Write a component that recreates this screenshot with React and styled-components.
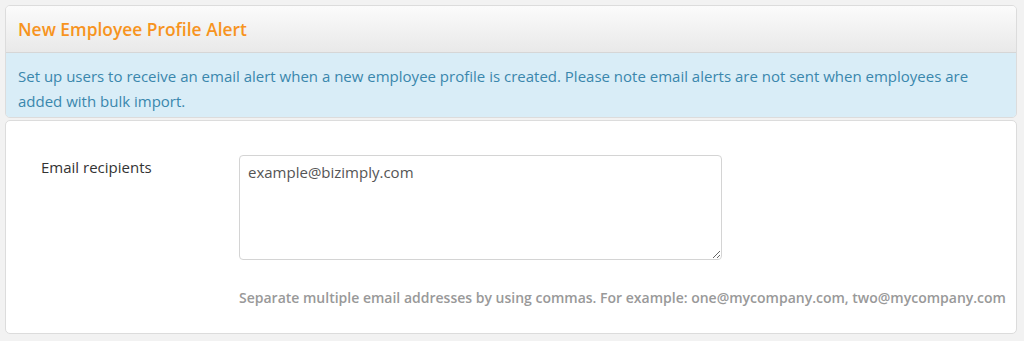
import React from 'react';
import styled, { createGlobalStyle } from 'styled-components';

const GlobalStyle = createGlobalStyle`
  body {
    margin: 0;
    background: #f2f2f2;
    font-family: "Open Sans", "Liberation Sans", sans-serif;
  }
`;

const Page = styled.div`
  padding: 5px 7px 8px 5px;
`;

const Widget = styled.section`
  display: flex;
  flex-direction: column;
  gap: 2px;
`;

const Top = styled.div`
  border: 1px solid #dcdcdc;
  border-radius: 5px;
  overflow: hidden;
`;

const Header = styled.header`
  height: 46px;
  display: flex;
  align-items: center;
  padding: 0 12px;
  background: linear-gradient(to bottom, #fbfbfb 0%, #e9e9e9 100%);
  border-bottom: 1px solid #d6d6d6;
`;

const Title = styled.h3`
  margin: 0 0 1px;
  font-size: 17.4px;
  font-weight: 600;
  color: #f7941e;
`;

const Notice = styled.div`
  background: #d9edf7;
  color: #3a87ad;
  font-size: 15px;
  line-height: 25px;
  padding: 11px 12px 3px;
`;

const Body = styled.div`
  background: #fff;
  border: 1px solid #dcdcdc;
  border-radius: 5px;
  padding: 34px 12px 26px 35px;
`;

const FormRow = styled.div`
  display: grid;
  grid-template-columns: 198px 1fr;
`;

const Label = styled.label`
  font-size: 15px;
  color: #333;
  padding-top: 1px;
  line-height: 22px;
`;

const Field = styled.div`
  display: flex;
  flex-direction: column;
`;

const TextArea = styled.textarea`
  box-sizing: border-box;
  width: 483px;
  height: 105px;
  border: 1px solid #d4d4d4;
  border-radius: 4px;
  padding: 6px 8px;
  font-family: inherit;
  font-size: 15px;
  line-height: 20px;
  color: #555;
  resize: vertical;
  outline: none;
`;

const Help = styled.p`
  margin: 29px 0 0;
  font-size: 14px;
  font-weight: 600;
  color: #999;
  line-height: 18px;
  white-space: nowrap;
`;

export default function App() {
  return (
    <>
      <GlobalStyle />
      <Page>
        <Widget>
          <Top>
            <Header>
              <Title>New Employee Profile Alert</Title>
            </Header>
            <Notice>
              Set up users to receive an email alert when a new employee profile is created. Please note email alerts are not sent when employees are added with bulk import.
            </Notice>
          </Top>
          <Body>
            <FormRow>
              <Label htmlFor="recipients">Email recipients</Label>
              <Field>
                <TextArea id="recipients" defaultValue="example@bizimply.com" />
                <Help>Separate multiple email addresses by using commas. For example: one@mycompany.com, two@mycompany.com</Help>
              </Field>
            </FormRow>
          </Body>
        </Widget>
      </Page>
    </>
  );
}
